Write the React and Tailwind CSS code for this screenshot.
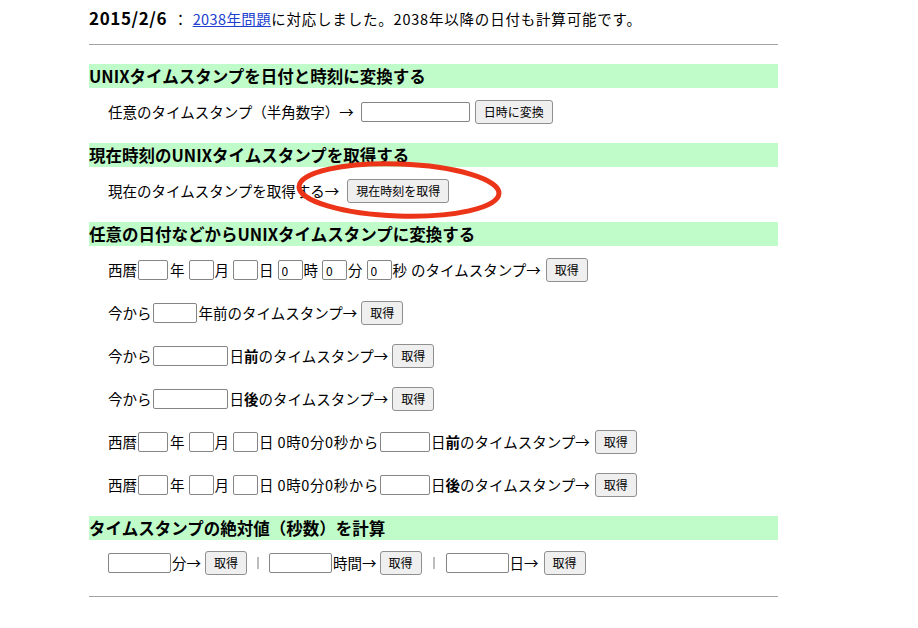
import React from 'react';

// 取得ボタン（グレーのネイティブ風）
const Btn = ({ children, className = '' }) => (
  <button
    type="button"
    className={`h-[24px] px-[8px] text-[12px] leading-none text-black bg-[#efefef] border border-[#8f8f8f] rounded-[3px] shrink-0 ${className}`}
  >
    {children}
  </button>
);

// 小さい入力欄
const Field = ({ w, value, className = '' }) => (
  <input
    type="text"
    defaultValue={value}
    className={`h-[20px] ${w} px-[3px] text-[12px] text-black bg-white border border-[#858585] rounded-[2px] outline-none shrink-0 ${className}`}
  />
);

const Heading = ({ children, className = '' }) => (
  <h3 className={`h-[24px] leading-[24px] bg-[#c0fcca] text-[16.5px] font-bold text-black ${className}`}>
    {children}
  </h3>
);

const Row = ({ children, className = '' }) => (
  <div className={`flex items-center h-[24px] pl-[19px] whitespace-nowrap ${className}`}>{children}</div>
);

// 西暦・年・月・日の入力群
const DateFields = () => (
  <>
    <span>西暦</span>
    <Field w="w-[30px]" className="ml-[1px]" />
    <span className="ml-[2px]">年</span>
    <Field w="w-[25px]" className="ml-[4px]" />
    <span className="ml-[1px]">月</span>
    <Field w="w-[25px]" className="ml-[4px]" />
    <span className="ml-[1px]">日</span>
  </>
);

const App = () => {
  return (
    <div className="relative min-h-[628px] bg-white text-black text-[14.5px] font-['Noto_Sans_CJK_JP','Liberation_Sans',sans-serif]">
      <div className="ml-[89px] w-[689px] pt-[8px]">
        <p className="h-[20px] leading-[20px] whitespace-nowrap">
          <b className="text-[17px] tracking-[0.6px]">2015/2/6</b>
          <span className="ml-[6px] mr-[5px]">：</span>
          <a href="#" className="text-[#2040d0] underline tracking-[0.4px]">2038年問題</a>
          <span className="tracking-[0.8px]">に対応しました。2038年以降の日付も計算可能です。</span>
        </p>
        <div className="mt-[16px] border-t border-[#a3a3a3]" />

        <Heading className="mt-[19px]">UNIXタイムスタンプを日付と時刻に変換する</Heading>
        <Row className="mt-[12px]">
          <span>任意のタイムスタンプ（半角数字）→</span>
          <Field w="w-[109px]" className="ml-[7px]" />
          <Btn className="ml-[5px]">日時に変換</Btn>
        </Row>

        <Heading className="mt-[19px]">現在時刻のUNIXタイムスタンプを取得する</Heading>
        <Row className="mt-[12px]">
          <span>現在のタイムスタンプを取得する→</span>
          <Btn className="ml-[8px]">現在時刻を取得</Btn>
        </Row>

        <Heading className="mt-[19px]">任意の日付などからUNIXタイムスタンプに変換する</Heading>
        <Row className="mt-[12px]">
          <DateFields />
          <Field w="w-[25px]" value="0" className="ml-[4px]" />
          <span className="ml-[1px]">時</span>
          <Field w="w-[25px]" value="0" className="ml-[4px]" />
          <span className="ml-[1px]">分</span>
          <Field w="w-[25px]" value="0" className="ml-[4px]" />
          <span className="ml-[1px]">秒</span>
          <span className="ml-[4px]">のタイムスタンプ→</span>
          <Btn className="ml-[5px]">取得</Btn>
        </Row>
        <Row className="mt-[19px]">
          <span>今から</span>
          <Field w="w-[44px]" className="ml-[1px]" />
          <span className="ml-[2px]">年前のタイムスタンプ→</span>
          <Btn className="ml-[4px]">取得</Btn>
        </Row>
        <Row className="mt-[19px]">
          <span>今から</span>
          <Field w="w-[75px]" className="ml-[1px]" />
          <span className="ml-[2px]">日<b>前</b>のタイムスタンプ→</span>
          <Btn className="ml-[4px]">取得</Btn>
        </Row>
        <Row className="mt-[19px]">
          <span>今から</span>
          <Field w="w-[75px]" className="ml-[1px]" />
          <span className="ml-[2px]">日<b>後</b>のタイムスタンプ→</span>
          <Btn className="ml-[4px]">取得</Btn>
        </Row>
        <Row className="mt-[19px]">
          <DateFields />
          <span className="ml-[4px] tracking-[0.6px]">0時0分0秒から</span>
          <Field w="w-[50px]" className="ml-[1px]" />
          <span className="ml-[1px]">日<b>前</b>のタイムスタンプ→</span>
          <Btn className="ml-[5px]">取得</Btn>
        </Row>
        <Row className="mt-[19px]">
          <DateFields />
          <span className="ml-[4px] tracking-[0.6px]">0時0分0秒から</span>
          <Field w="w-[50px]" className="ml-[1px]" />
          <span className="ml-[1px]">日<b>後</b>のタイムスタンプ→</span>
          <Btn className="ml-[5px]">取得</Btn>
        </Row>

        <Heading className="mt-[19px]">タイムスタンプの絶対値（秒数）を計算</Heading>
        <Row className="mt-[11px]">
          <Field w="w-[63px]" />
          <span className="ml-[1px]">分→</span>
          <Btn className="ml-[4px]">取得</Btn>
          <span className="ml-[10px] w-[2px] h-[12px] bg-[#bdbdbd]" />
          <Field w="w-[63px]" className="ml-[10px]" />
          <span className="ml-[1px]">時間→</span>
          <Btn className="ml-[3px]">取得</Btn>
          <span className="ml-[11px] w-[2px] h-[12px] bg-[#bdbdbd]" />
          <Field w="w-[63px]" className="ml-[11px]" />
          <span className="ml-[1px]">日→</span>
          <Btn className="ml-[5px]">取得</Btn>
        </Row>
        <div className="mt-[21px] border-t border-[#a3a3a3]" />
      </div>

      {/* 赤丸の注目マーク */}
      <svg
        className="absolute left-[294px] top-[159px] pointer-events-none"
        width="210"
        height="62"
        viewBox="0 0 210 62"
      >
        <ellipse
          cx="105"
          cy="31"
          rx="100"
          ry="26"
          fill="none"
          stroke="#ec3419"
          strokeWidth="5"
          transform="rotate(2 105 31)"
        />
      </svg>
    </div>
  );
};

export default App;
